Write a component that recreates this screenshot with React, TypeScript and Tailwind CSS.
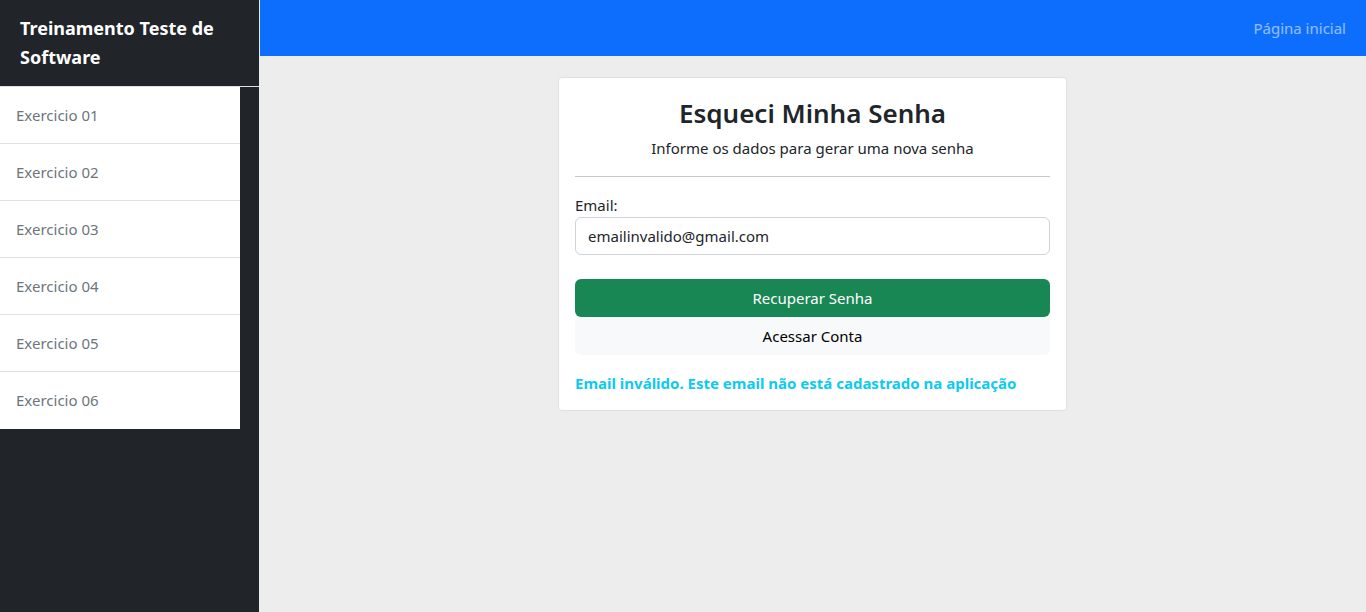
import { useState } from "react";

const exercicios = ["Exercicio 01", "Exercicio 02", "Exercicio 03", "Exercicio 04", "Exercicio 05", "Exercicio 06"];

export default function App() {
  const [email, setEmail] = useState("emailinvalido@gmail.com");

  return (
    <div className="flex min-h-[612px] w-full text-[#212529]" style={{ fontFamily: '"Noto Sans", "Open Sans", sans-serif' }}>
      {/* sidebar */}
      <aside className="w-[259px] shrink-0 bg-[#212529]">
        <div className="h-[87px] border-b border-[#dee2e6] px-5 pt-[14px] text-[18px] font-bold leading-[29px] text-white">
          Treinamento Teste de Software
        </div>
        <ul className="w-[240px] bg-white">
          {exercicios.map((e, i) => (
            <li
              key={e}
              className={`flex h-[57px] items-center px-4 text-[15px] text-[#6c757d] ${i < exercicios.length - 1 ? "border-b border-[#dee2e6]" : ""}`}
            >
              {e}
            </li>
          ))}
        </ul>
      </aside>

      {/* main */}
      <div className="flex flex-1 flex-col bg-[#ededed]">
        <header className="ml-px flex h-[56px] items-center justify-end bg-[#0d6efd] px-5">
          <a className="text-[15px] text-white/55">Página inicial</a>
        </header>

        <div className="flex justify-center pt-[21px]">
          <div className="w-[509px] rounded border border-[#dee2e6] bg-white px-4 pb-[16px] pt-[16px]">
            <h2 className="text-center text-[26px] font-semibold leading-[38px]">Esqueci Minha Senha</h2>
            <p className="mt-[4px] text-center text-[15px] leading-[24px]">Informe os dados para gerar uma nova senha</p>
            <hr className="mt-[16px] border-[#c9c9c9]" />

            <label className="mt-[18px] block text-[15px] leading-[20px]">Email:</label>
            <input
              value={email}
              onChange={(ev) => setEmail(ev.target.value)}
              className="mt-[2px] h-[38px] w-full rounded-md border border-[#ced4da] px-3 text-[15px] text-[#212529] outline-none"
            />

            <button className="mt-[24px] h-[38px] w-full rounded-md bg-[#198754] text-[15px] text-white">Recuperar Senha</button>
            <button className="h-[38px] w-full rounded-md bg-[#f8f9fa] text-[15px] text-black">Acessar Conta</button>

            <p className="mt-[17px] text-[15px] font-bold leading-[22px] text-[#0dcaf0]">
              Email inválido. Este email não está cadastrado na aplicação
            </p>
          </div>
        </div>
      </div>
    </div>
  );
}
